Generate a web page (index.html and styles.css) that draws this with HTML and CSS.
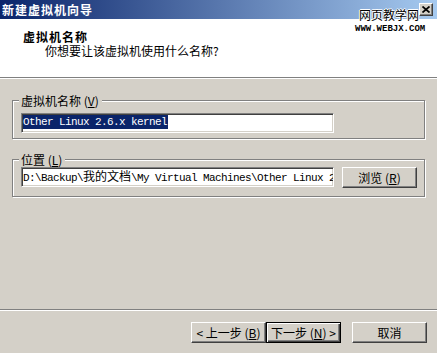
FILE: index.html
```html
<!DOCTYPE html>
<html lang="zh-CN">
<head>
<meta charset="utf-8">
<title>新建虚拟机向导</title>
<link rel="stylesheet" href="styles.css">
</head>
<body>
<div class="dialog">
  <div class="titlebar">
    <span class="title">新建虚拟机向导</span>
    <button class="close" aria-label="关闭"><svg width="8" height="7" viewBox="0 0 8 7"><path d="M0.5 0.5L7.5 6.5M7.5 0.5L0.5 6.5" stroke="#000" stroke-width="1.7" fill="none"/></svg></button>
  </div>
  <div class="header">
    <div class="h-title">虚拟机名称</div>
    <div class="h-sub">你想要让该虚拟机使用什么名称?</div>
  </div>
  <div class="sep"></div>
  <div class="content">
    <div class="group g1">
      <span class="legend">虚拟机名称 (<u>V</u>)</span>
      <div class="field"><span class="sel">Other Linux 2.6.x kernel</span></div>
    </div>
    <div class="group g2">
      <span class="legend">位置 (<u>L</u>)</span>
      <div class="row">
        <div class="field">D:\Backup\<span class="cjk">我的文档</span>\My Virtual Machines\Other Linux 2.6.x kernel</div>
        <button class="btn browse">浏览 (<u>R</u>)</button>
      </div>
    </div>
  </div>
  <div class="sep"></div>
  <div class="footer">
    <button class="btn">&lt; 上一步 (<u>B</u>)</button>
    <button class="btn default">下一步 (<u>N</u>) &gt;</button>
    <button class="btn cancel">取消</button>
  </div>
  <div class="watermark">
    <div class="wm-cn">网页教学网</div>
    <div class="wm-en">WWW.WEBJX.COM</div>
  </div>
</div>
</body>
</html>
```
FILE: styles.css
```css
* { box-sizing: border-box; }
html, body { margin: 0; padding: 0; }
body {
  width: 437px;
  height: 353px;
  overflow: hidden;
  background: #d4d0c8;
  font-family: "Noto Sans CJK SC", "Liberation Sans", sans-serif;
  font-size: 12px;
  color: #000;
}
.dialog {
  position: relative;
  display: flex;
  flex-direction: column;
  height: 353px;
}
.titlebar {
  height: 19px;
  display: flex;
  align-items: center;
  padding-left: 2px;
  background: linear-gradient(to right, #0a246a, #a6caf0);
}
.title {
  color: #fff;
  font-weight: bold;
  letter-spacing: 1px;
  line-height: 13px;
}
.close {
  margin-left: auto;
  margin-right: 4px;
  width: 14px;
  height: 13px;
  padding: 0;
  background: #d4d0c8;
  border: 1px solid;
  border-color: #fff #404040 #404040 #fff;
  box-shadow: inset -1px -1px 0 #808080;
  display: flex;
  align-items: center;
  justify-content: center;
}
.header {
  height: 58px;
  background: #fff;
  padding: 11px 0 0 23px;
}
.h-title {
  font-weight: bold;
  letter-spacing: 1px;
  line-height: 13px;
}
.h-sub {
  margin: 1px 0 0 22px;
  line-height: 13px;
}
.sep {
  height: 2px;
  border-top: 1px solid #808080;
  border-bottom: 1px solid #fff;
}
.content {
  flex: 1;
  padding: 21px 0 0 12px;
}
.group {
  position: relative;
  width: 413px;
  border: 1px solid #808080;
  box-shadow: 1px 1px 0 #fff, inset 1px 1px 0 #fff;
}
.g1 { padding: 12px 0 5px 8px; }
.g2 { margin-top: 20px; padding: 7px 0 8px 8px; }
.legend {
  position: absolute;
  left: 6px;
  top: -7px;
  padding: 0 3px 0 2px;
  background: #d4d0c8;
  line-height: 13px;
  white-space: nowrap;
}
.field {
  width: 313px;
  height: 20px;
  background: #fff;
  border: 1px solid;
  border-color: #808080 #fff #fff #808080;
  box-shadow: inset 1px 1px 0 #404040, inset -1px -1px 0 #d4d0c8;
  padding: 1px 0 0 1px;
  font-family: "Liberation Mono", "Noto Sans CJK SC", monospace;
  font-size: 11px;
  letter-spacing: -0.6px;
  line-height: 14px;
  white-space: nowrap;
  overflow: hidden;
}
.cjk {
  font-family: "Noto Sans CJK SC", sans-serif;
  font-size: 12px;
  letter-spacing: 0;
}
.sel {
  display: inline-block;
  background: #0a246a;
  color: #fff;
  padding-right: 1px;
}
.row {
  display: flex;
  align-items: flex-start;
}
.btn {
  width: 75px;
  height: 21px;
  padding: 0;
  background: #d4d0c8;
  border: 1px solid;
  border-color: #fff #404040 #404040 #fff;
  box-shadow: inset -1px -1px 0 #808080;
  font-family: "Noto Sans CJK SC", "Liberation Sans", sans-serif;
  font-size: 12px;
  line-height: 13px;
  color: #000;
  white-space: nowrap;
}
.browse { margin-left: 8px; }
.footer {
  height: 42px;
  display: flex;
  justify-content: flex-end;
  align-items: flex-start;
  padding: 11px 10px 0 0;
}
.btn.default {
  border: 1px solid #000;
  box-shadow: inset 1px 1px 0 #fff, inset -1px -1px 0 #404040, inset -2px -2px 0 #808080;
}
.btn.cancel { margin-left: 11px; }
.watermark {
  position: absolute;
  top: 8px;
  left: 359px;
}
.wm-cn {
  font-size: 12px;
  line-height: 14px;
  letter-spacing: 0;
  color: #000;
  text-shadow: 1px 0 0 #fff, -1px 0 0 #fff, 0 1px 0 #fff, 0 -1px 0 #fff;
}
.wm-en {
  margin: 3px 0 0 -4px;
  font-family: "Liberation Mono", monospace;
  font-weight: bold;
  font-size: 9px;
  line-height: 8px;
  color: #000;
}
```
